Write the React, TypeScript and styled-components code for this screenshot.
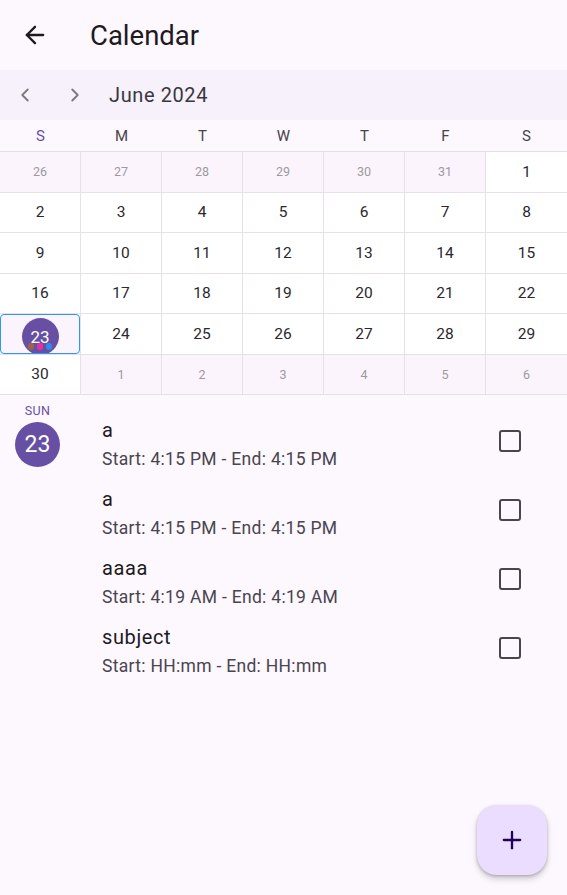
import React from "react";
import styled, { createGlobalStyle } from "styled-components";
import { ArrowLeft, ChevronLeft, ChevronRight, Plus } from "lucide-react";

const Global = createGlobalStyle`
  html, body { margin: 0; padding: 0; background: #fdf7fe; }
  body { font-family: Roboto, "Noto Sans", sans-serif; color: #1d1b20; }
  * { box-sizing: border-box; }
`;

const Page = styled.div`
  width: 567px;
  height: 895px;
  background: #fdf7fe;
  display: flex;
  flex-direction: column;
  position: relative;
  overflow: hidden;
`;

const AppBar = styled.header`
  height: 70px;
  display: flex;
  align-items: center;
  padding-left: 20px;
`;

const IconBtn = styled.button`
  width: 30px;
  height: 30px;
  border: 0;
  background: none;
  padding: 0;
  display: flex;
  align-items: center;
  justify-content: center;
  color: #1d1b20;
`;

const Title = styled.h1`
  margin: 0 0 0 40px;
  font-size: 27.5px;
  font-weight: 400;
  color: #1d1b20;
`;

const MonthBar = styled.div`
  height: 50px;
  background: #f6f1fa;
  display: flex;
  align-items: center;
`;

const NavBtn = styled.div`
  width: 50px;
  height: 50px;
  display: flex;
  align-items: center;
  justify-content: center;
  color: #7a7a7a;
`;

const MonthLabel = styled.div`
  margin-left: 9px;
  font-size: 20px;
  color: #3a373e;
  letter-spacing: 0.6px;
`;

const WeekRow = styled.div`
  height: 32px;
  display: grid;
  grid-template-columns: repeat(7, 1fr);
  align-items: center;
  border-bottom: 1.5px solid #e6e1e9;
`;

const WeekDay = styled.div<{ $accent?: boolean }>`
  text-align: center;
  font-size: 15px;
  color: ${(p) => (p.$accent ? "#6750a4" : "#46434a")};
`;

const Grid = styled.div`
  height: 243px;
  display: grid;
  grid-template-columns: repeat(7, 1fr);
  grid-template-rows: repeat(6, 1fr);
`;

const Cell = styled.div<{ $muted?: boolean; $last?: boolean }>`
  position: relative;
  display: flex;
  align-items: center;
  justify-content: center;
  background: ${(p) => (p.$muted ? "#fcf4fc" : "#ffffff")};
  border-right: ${(p) => (p.$last ? "0" : "1.5px solid #e6e1e9")};
  border-bottom: 1.5px solid #e6e1e9;
  font-size: ${(p) => (p.$muted ? "12.5px" : "15.5px")};
  color: ${(p) => (p.$muted ? "#9d9a9f" : "#2a282d")};
`;

const SelectedFrame = styled.div`
  position: absolute;
  inset: 0 0 0 0;
  border: 1.5px solid #2f96f3;
  border-radius: 4px;
  background: #fcf4fc;
  display: flex;
  align-items: center;
  justify-content: center;
  overflow: hidden;
`;

const SelCircle = styled.div`
  width: 37px;
  height: 37px;
  border-radius: 50%;
  background: #6750a4;
  color: #fff;
  font-size: 17px;
  display: flex;
  align-items: center;
  justify-content: center;
  margin-top: 6px;
`;

const Dots = styled.div`
  position: absolute;
  left: 0;
  right: 0;
  bottom: 3px;
  display: flex;
  justify-content: center;
  gap: 2.5px;
`;

const Dot = styled.span<{ $c: string }>`
  width: 6.5px;
  height: 6.5px;
  border-radius: 50%;
  background: ${(p) => p.$c};
`;

const Agenda = styled.div`
  display: flex;
  padding-top: 9px;
`;

const DayCol = styled.div`
  width: 75px;
  display: flex;
  flex-direction: column;
  align-items: center;
`;

const DayName = styled.div`
  font-size: 12.5px;
  color: #6750a4;
  line-height: 14px;
  letter-spacing: 0.4px;
`;

const DayCircle = styled.div`
  margin-top: 4px;
  width: 45px;
  height: 45px;
  border-radius: 50%;
  background: #6750a4;
  color: #fff;
  font-size: 23px;
  display: flex;
  align-items: center;
  justify-content: center;
`;

const Events = styled.div`
  flex: 1;
  display: flex;
  flex-direction: column;
  padding-left: 27px;
  padding-top: 13px;
`;

const EventRow = styled.div`
  height: 69px;
  display: flex;
  align-items: flex-start;
`;

const EventText = styled.div`
  flex: 1;
`;

const EventTitle = styled.div`
  font-size: 20px;
  line-height: 26px;
  letter-spacing: 0.6px;
  color: #1d1b20;
`;

const EventSub = styled.div`
  font-size: 17.5px;
  line-height: 24px;
  letter-spacing: 0.3px;
  margin-top: 4px;
  color: #49454f;
`;

const Check = styled.div`
  width: 22px;
  height: 22px;
  border: 2.5px solid #49454f;
  border-radius: 3px;
  margin-right: 46px;
  margin-top: 13px;
`;

const Fab = styled.button`
  position: absolute;
  right: 20px;
  bottom: 20px;
  width: 70px;
  height: 70px;
  border-radius: 20px;
  border: 0;
  background: #eaddff;
  color: #21005d;
  display: flex;
  align-items: center;
  justify-content: center;
  box-shadow: 0 4px 6px rgba(0, 0, 0, 0.18), 0 1px 3px rgba(0, 0, 0, 0.2);
`;

type Day = { n: number; muted?: boolean; selected?: boolean };

const days: Day[] = [
  ...[26, 27, 28, 29, 30, 31].map((n) => ({ n, muted: true })),
  ...Array.from({ length: 30 }, (_, i) => ({ n: i + 1, selected: i + 1 === 23 })),
  ...[1, 2, 3, 4, 5, 6].map((n) => ({ n, muted: true })),
];

const events = [
  { title: "a", sub: "Start: 4:15 PM - End: 4:15 PM" },
  { title: "a", sub: "Start: 4:15 PM - End: 4:15 PM" },
  { title: "aaaa", sub: "Start: 4:19 AM - End: 4:19 AM" },
  { title: "subject", sub: "Start: HH:mm - End: HH:mm" },
];

export default function App() {
  return (
    <Page>
      <Global />
      <AppBar>
        <IconBtn aria-label="back">
          <ArrowLeft size={28} strokeWidth={2} />
        </IconBtn>
        <Title>Calendar</Title>
      </AppBar>
      <MonthBar>
        <NavBtn>
          <ChevronLeft size={22} strokeWidth={2} />
        </NavBtn>
        <NavBtn>
          <ChevronRight size={22} strokeWidth={2} />
        </NavBtn>
        <MonthLabel>June 2024</MonthLabel>
      </MonthBar>
      <WeekRow>
        {["S", "M", "T", "W", "T", "F", "S"].map((d, i) => (
          <WeekDay key={i} $accent={i === 0}>
            {d}
          </WeekDay>
        ))}
      </WeekRow>
      <Grid>
        {days.map((d, i) => (
          <Cell key={i} $muted={d.muted} $last={i % 7 === 6}>
            {d.selected ? (
              <SelectedFrame>
                <SelCircle>{d.n}</SelCircle>
                <Dots>
                  <Dot $c="#9a6546" />
                  <Dot $c="#e92ea2" />
                  <Dot $c="#3388e8" />
                </Dots>
              </SelectedFrame>
            ) : (
              d.n
            )}
          </Cell>
        ))}
      </Grid>
      <Agenda>
        <DayCol>
          <DayName>SUN</DayName>
          <DayCircle>23</DayCircle>
        </DayCol>
        <Events>
          {events.map((e, i) => (
            <EventRow key={i}>
              <EventText>
                <EventTitle>{e.title}</EventTitle>
                <EventSub>{e.sub}</EventSub>
              </EventText>
              <Check />
            </EventRow>
          ))}
        </Events>
      </Agenda>
      <Fab aria-label="add">
        <Plus size={28} strokeWidth={2} />
      </Fab>
    </Page>
  );
}
